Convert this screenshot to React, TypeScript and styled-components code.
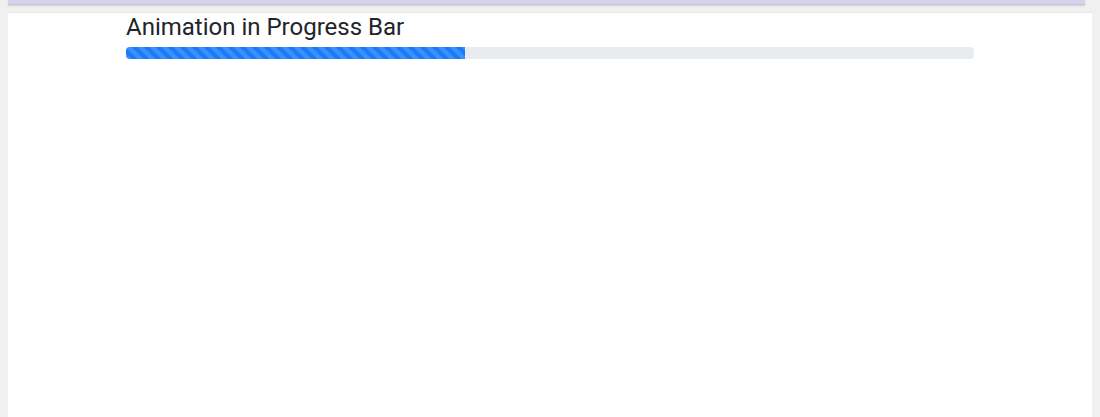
import React from "react";
import styled, { createGlobalStyle, keyframes } from "styled-components";

const Global = createGlobalStyle`
  html, body { margin: 0; padding: 0; background: #f0f0f0; overflow: hidden; }
  body { font-family: Roboto, "Liberation Sans", Arial, sans-serif; color: #212529; }
`;

const Page = styled.div`
  height: 417px;
  display: flex;
  flex-direction: column;
  padding: 0 8px;
  box-sizing: border-box;
`;

const TopStrip = styled.div`
  height: 4px;
  margin-right: 7px;
  background: #d6d3ef;
  border-bottom: 1px solid #c4c4c4;
  box-shadow: 0 1px 2px rgba(0, 0, 0, 0.12);
  flex-shrink: 0;
`;

const Panel = styled.div`
  margin-top: 7px;
  flex: 1;
  background: #ffffff;
  border-top: 1px solid #e6e6e6;
  display: flex;
  justify-content: center;
`;

const Container = styled.div`
  width: 848px;
  display: flex;
  flex-direction: column;
`;

const Title = styled.h4`
  margin: 0 0 5px 0;
  font-size: 24px;
  font-weight: 400;
  line-height: 1.2;
  letter-spacing: 0;
  color: #212529;
`;

const stripes = keyframes`
  from { background-position: 16px 0; }
  to { background-position: 0 0; }
`;

const Track = styled.div`
  height: 12px;
  border-radius: 4px;
  background: #e9ecef;
  overflow: hidden;
  display: flex;
`;

const Fill = styled.div`
  height: 100%;
  background-color: #1a7cfb;
  background-image: linear-gradient(
    45deg,
    rgba(255, 255, 255, 0.15) 25%,
    transparent 25%,
    transparent 50%,
    rgba(255, 255, 255, 0.15) 50%,
    rgba(255, 255, 255, 0.15) 75%,
    transparent 75%,
    transparent
  );
  background-size: 12px 12px;
  animation: ${stripes} 1s linear infinite;
  animation-play-state: paused;
`;

export default function App() {
  const value = 40;
  return (
    <>
      <Global />
      <Page>
        <TopStrip />
        <Panel>
          <Container>
            <Title>Animation in Progress Bar</Title>
            <Track>
              <Fill style={{ width: `${value}%` }} />
            </Track>
          </Container>
        </Panel>
      </Page>
    </>
  );
}
